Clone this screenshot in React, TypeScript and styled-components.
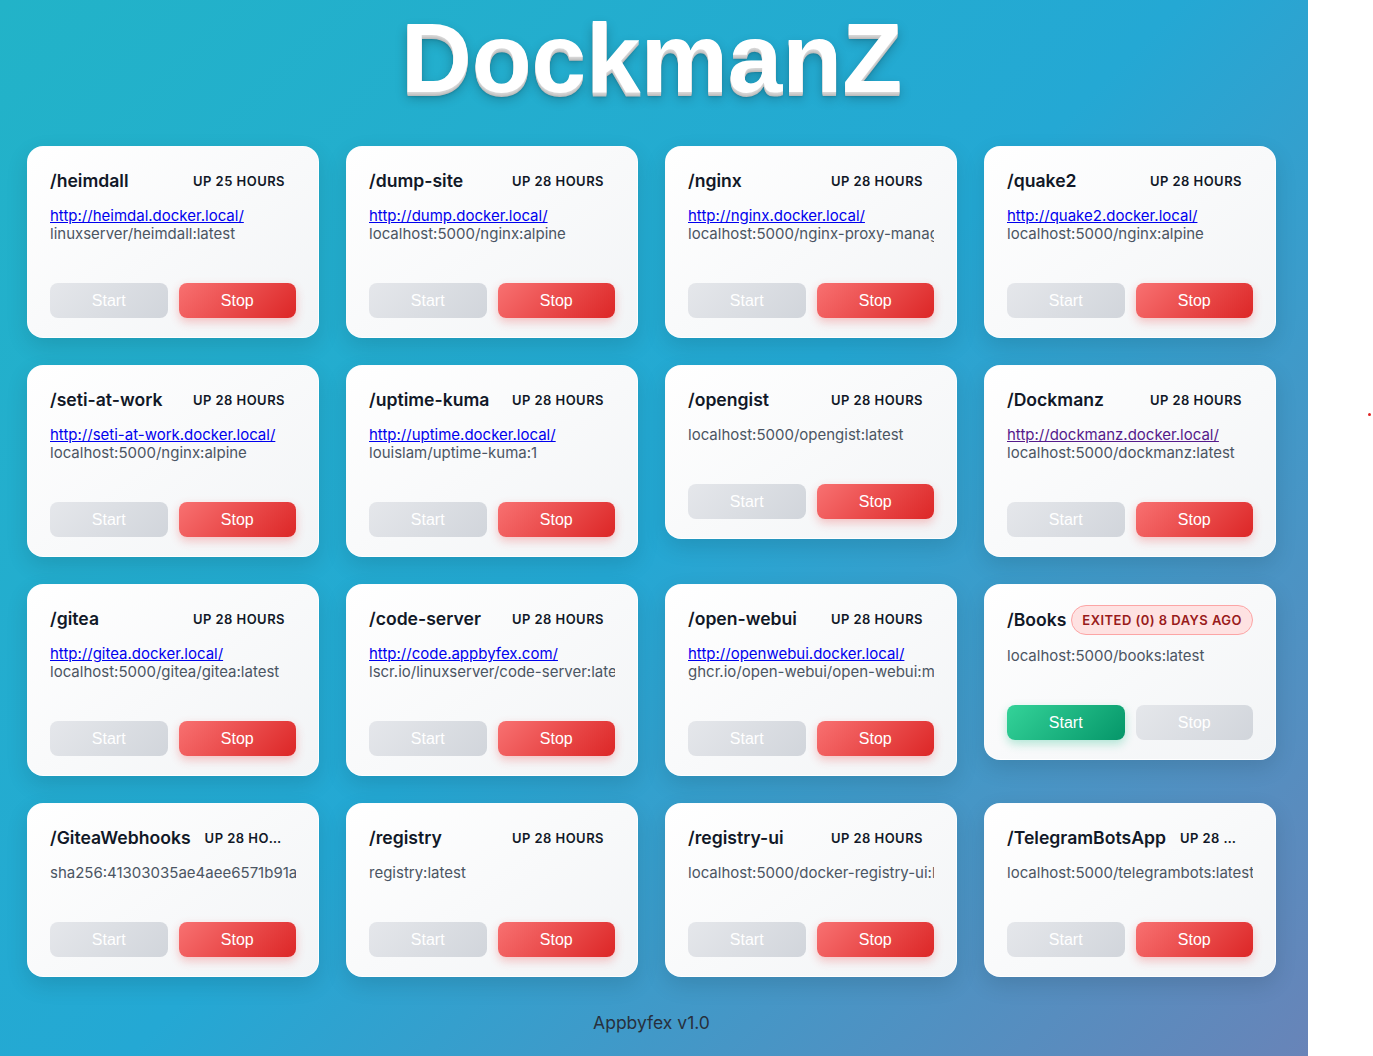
import React from "react";
import styled, { createGlobalStyle } from "styled-components";

const GlobalStyle = createGlobalStyle`
  html, body { margin: 0; padding: 0; background: #ffffff; }
  body { font-family: Inter, "Noto Sans", sans-serif; }
  * { box-sizing: border-box; }
`;

const Page = styled.div`
  position: relative;
  width: 1308px;
  min-height: 1056px;
  background: linear-gradient(135deg, #22b3c8 0%, #24a8d4 50%, #6884b8 100%);
  padding: 9px 32px 22px 27px;
  display: flex;
  flex-direction: column;
  align-items: stretch;
`;

const Title = styled.h1`
  margin: 0 0 39px;
  text-align: center;
  font-family: "Liberation Sans", Arial, sans-serif;
  font-weight: 700;
  font-size: 98px;
  line-height: 1;
  color: #ffffff;
  text-shadow:
    0 1px 0 #d6d6d6,
    0 2px 0 #cfcfcf,
    0 3px 0 #c6c6c6,
    0 4px 0 #bdbdbd,
    0 5px 2px rgba(0, 0, 0, 0.12),
    0 6px 12px rgba(0, 0, 0, 0.25);
`;

const Grid = styled.div`
  display: grid;
  grid-template-columns: repeat(4, 292px);
  column-gap: 27px;
  row-gap: 27px;
  align-items: start;
`;

const Card = styled.div`
  background: linear-gradient(145deg, #ffffff 0%, #f2f4f6 100%);
  border: 1px solid rgba(255, 255, 255, 0.7);
  border-radius: 16px;
  padding: 20px 22px 19px;
  box-shadow: 0 8px 22px rgba(0, 0, 0, 0.12);
  display: flex;
  flex-direction: column;
  min-width: 0;
`;

const Header = styled.div`
  display: flex;
  align-items: center;
  justify-content: space-between;
  gap: 3px;
  min-height: 28px;
  margin-bottom: 12px;
`;

const Name = styled.div`
  flex-shrink: 0;
  font-size: 17.6px;
  line-height: 28px;
  font-weight: 600;
  color: #111827;
  white-space: nowrap;
`;

const Badge = styled.span<{ $exited?: boolean }>`
  min-width: 0;
  flex-shrink: ${(p) => (p.$exited ? 0 : 1)};
  overflow: hidden;
  text-overflow: ellipsis;
  white-space: nowrap;
  font-size: 13px;
  line-height: 18px;
  font-weight: 600;
  letter-spacing: 0.035em;
  text-transform: uppercase;
  border-radius: 999px;
  padding: ${(p) => (p.$exited ? "5px 10px" : "5px 11px")};
  color: ${(p) => (p.$exited ? "#991b1b" : "#111827")};
  background: ${(p) => (p.$exited ? "#fee2e2" : "transparent")};
  border: ${(p) => (p.$exited ? "1px solid #fca5a5" : "none")};
`;

const Info = styled.div`
  display: flex;
  flex-direction: column;
  font-size: 15px;
  line-height: 18px;
  min-width: 0;
`;

const Link = styled.a<{ $visited?: boolean }>`
  color: ${(p) => (p.$visited ? "#551a8b" : "#0000ee")};
  text-decoration: underline;
  white-space: nowrap;
  overflow: hidden;
`;

const ImageText = styled.div`
  color: #4b5563;
  white-space: nowrap;
  overflow: hidden;
`;

const Actions = styled.div`
  display: flex;
  gap: 11px;
  margin-top: 40px;
`;

const Button = styled.button<{ $variant: "start" | "stop" | "disabled" }>`
  flex: 1;
  height: 35px;
  border: none;
  border-radius: 8px;
  font-family: "Liberation Sans", Arial, sans-serif;
  font-size: 16px;
  color: #ffffff;
  cursor: ${(p) => (p.$variant === "disabled" ? "not-allowed" : "pointer")};
  background: ${(p) =>
    p.$variant === "stop"
      ? "linear-gradient(135deg, #f87171 0%, #dc2626 100%)"
      : p.$variant === "start"
      ? "linear-gradient(135deg, #34d399 0%, #059669 100%)"
      : "linear-gradient(135deg, #e5e7eb 0%, #d1d5db 100%)"};
  box-shadow: ${(p) =>
    p.$variant === "stop"
      ? "0 4px 10px rgba(239, 68, 68, 0.3)"
      : p.$variant === "start"
      ? "0 4px 10px rgba(16, 185, 129, 0.3)"
      : "none"};
`;

const Footer = styled.footer`
  margin-top: 34px;
  text-align: center;
  font-size: 17.5px;
  line-height: 24px;
  color: #27303d;
`;

const Dot = styled.span`
  position: absolute;
  left: 1368px;
  top: 413px;
  width: 3px;
  height: 3px;
  border-radius: 50%;
  background: #e02424;
`;

type Container = {
  name: string;
  status: string;
  exited?: boolean;
  url?: string;
  visited?: boolean;
  image: string;
};

const containers: Container[] = [
  { name: "/heimdall", status: "Up 25 hours", url: "http://heimdal.docker.local/", image: "linuxserver/heimdall:latest" },
  { name: "/dump-site", status: "Up 28 hours", url: "http://dump.docker.local/", image: "localhost:5000/nginx:alpine" },
  { name: "/nginx", status: "Up 28 hours", url: "http://nginx.docker.local/", image: "localhost:5000/nginx-proxy-manager:latest" },
  { name: "/quake2", status: "Up 28 hours", url: "http://quake2.docker.local/", image: "localhost:5000/nginx:alpine" },
  { name: "/seti-at-work", status: "Up 28 hours", url: "http://seti-at-work.docker.local/", image: "localhost:5000/nginx:alpine" },
  { name: "/uptime-kuma", status: "Up 28 hours", url: "http://uptime.docker.local/", image: "louislam/uptime-kuma:1" },
  { name: "/opengist", status: "Up 28 hours", image: "localhost:5000/opengist:latest" },
  { name: "/Dockmanz", status: "Up 28 hours", url: "http://dockmanz.docker.local/", visited: true, image: "localhost:5000/dockmanz:latest" },
  { name: "/gitea", status: "Up 28 hours", url: "http://gitea.docker.local/", image: "localhost:5000/gitea/gitea:latest" },
  { name: "/code-server", status: "Up 28 hours", url: "http://code.appbyfex.com/", image: "lscr.io/linuxserver/code-server:latest" },
  { name: "/open-webui", status: "Up 28 hours", url: "http://openwebui.docker.local/", image: "ghcr.io/open-webui/open-webui:main" },
  { name: "/Books", status: "Exited (0) 8 days ago", exited: true, image: "localhost:5000/books:latest" },
  { name: "/GiteaWebhooks", status: "Up 28 hours", image: "sha256:41303035ae4aee6571b91a7c2d8e9f0" },
  { name: "/registry", status: "Up 28 hours", image: "registry:latest" },
  { name: "/registry-ui", status: "Up 28 hours", image: "localhost:5000/docker-registry-ui:latest" },
  { name: "/TelegramBotsApp", status: "Up 28 hours", image: "localhost:5000/telegrambots:latest" },
];

function ContainerCard({ c }: { c: Container }) {
  return (
    <Card>
      <Header>
        <Name>{c.name}</Name>
        <Badge $exited={c.exited}>{c.status}</Badge>
      </Header>
      <Info>
        {c.url && (
          <Link href={c.url} $visited={c.visited}>
            {c.url}
          </Link>
        )}
        <ImageText>{c.image}</ImageText>
      </Info>
      <Actions>
        <Button $variant={c.exited ? "start" : "disabled"} disabled={!c.exited}>
          Start
        </Button>
        <Button $variant={c.exited ? "disabled" : "stop"} disabled={!!c.exited}>
          Stop
        </Button>
      </Actions>
    </Card>
  );
}

export default function App() {
  return (
    <>
      <GlobalStyle />
      <Page>
        <Title>DockmanZ</Title>
        <Grid>
          {containers.map((c) => (
            <ContainerCard key={c.name} c={c} />
          ))}
        </Grid>
        <Footer>Appbyfex v1.0</Footer>
      </Page>
      <Dot />
    </>
  );
}
